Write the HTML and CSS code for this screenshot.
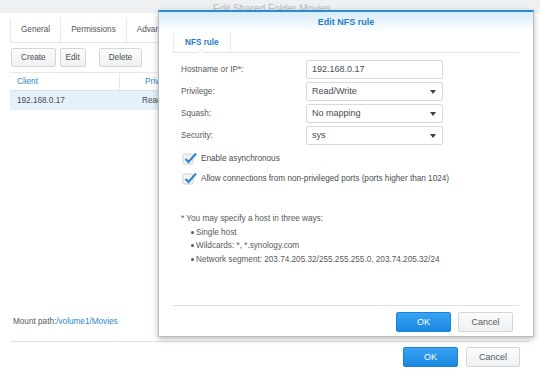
FILE: index.html
```html
<!DOCTYPE html>
<html lang="en">
<head>
    <meta charset="UTF-8">
    <title>Edit NFS rule</title>
    <link rel="stylesheet" href="styles.css">
</head>
<body>
    <div class="window">
        <div class="win-title">Edit Shared Folder Movies</div>
        <div class="win-body">
            <div class="tabs">
                <div class="tab active">General</div>
                <div class="tab">Permissions</div>
                <div class="tab">Advanced</div>
            </div>
            <div class="toolbar">
                <button class="btn">Create</button>
                <button class="btn btn-edit">Edit</button>
                <button class="btn btn-delete">Delete</button>
            </div>
            <div class="grid">
                <div class="grid-head">
                    <div class="col-client">Client</div>
                    <div class="col-priv">Privilege</div>
                </div>
                <div class="grid-row selected">
                    <div class="col-client">192.168.0.17</div>
                    <div class="col-priv">Read/Write</div>
                </div>
            </div>
            <div class="spacer"></div>
            <div class="mount">Mount path:<span class="link">/volume1/Movies</span></div>
        </div>
        <div class="win-footer">
            <button class="btn btn-primary">OK</button>
            <button class="btn btn-cancel">Cancel</button>
        </div>
    </div>

    <!-- NFS rule dialog -->
    <div class="dialog">
        <div class="dlg-title">Edit NFS rule</div>
        <div class="dlg-body">
            <div class="dlg-tabs">
                <div class="dlg-tab">NFS rule</div>
            </div>
            <div class="form">
                <div class="form-row">
                    <div class="label">Hostname or IP*:</div>
                    <div class="field">192.168.0.17</div>
                </div>
                <div class="form-row">
                    <div class="label">Privilege:</div>
                    <div class="field select">Read/Write<span class="arrow"></span></div>
                </div>
                <div class="form-row">
                    <div class="label">Squash:</div>
                    <div class="field select">No mapping<span class="arrow"></span></div>
                </div>
                <div class="form-row">
                    <div class="label">Security:</div>
                    <div class="field select">sys<span class="arrow"></span></div>
                </div>
                <div class="check-row">
                    <svg class="check" width="16" height="14" viewBox="0 0 16 14"><rect x="1" y="3" width="10" height="10" rx="1.5" fill="#f3f4f5" stroke="#cdd1d5"/><path d="M3.5 8 L6.5 11 L14 2.5" fill="none" stroke="#2b86d4" stroke-width="2.2"/></svg>
                    <span>Enable asynchronous</span>
                </div>
                <div class="check-row">
                    <svg class="check" width="16" height="14" viewBox="0 0 16 14"><rect x="1" y="3" width="10" height="10" rx="1.5" fill="#f3f4f5" stroke="#cdd1d5"/><path d="M3.5 8 L6.5 11 L14 2.5" fill="none" stroke="#2b86d4" stroke-width="2.2"/></svg>
                    <span>Allow connections from non-privileged ports (ports higher than 1024)</span>
                </div>
                <div class="note">* You may specify a host in three ways:</div>
                <ul class="ways">
                    <li>Single host</li>
                    <li>Wildcards: *, *.synology.com</li>
                    <li>Network segment: 203.74.205.32/255.255.255.0, 203.74.205.32/24</li>
                </ul>
            </div>
            <div class="spacer"></div>
            <div class="dlg-footer">
                <button class="btn btn-primary">OK</button>
                <button class="btn btn-cancel">Cancel</button>
            </div>
        </div>
    </div>
</body>
</html>
```

FILE: styles.css
```css
* {
    box-sizing: border-box;
}
body {
    margin: 0;
    width: 540px;
    height: 370px;
    overflow: hidden;
    position: relative;
    font-family: "Liberation Sans", Arial, sans-serif;
    font-size: 8.2px;
    color: #484c50;
    background: #fff;
}
.window {
    height: 370px;
    display: flex;
    flex-direction: column;
}
.win-title {
    height: 13px;
    background: #eef0f2;
    color: #b9bcc0;
    font-size: 10px;
    line-height: 13px;
    padding: 2px 0 0 213px;
    overflow: hidden;
}
.win-body {
    flex: 1;
    padding: 5px 10px 0;
    display: flex;
    flex-direction: column;
}
.tabs {
    display: flex;
    height: 25px;
    border-bottom: 1px solid #e3e6e9;
}
.tab {
    padding: 0 10px;
    line-height: 23px;
    color: #505458;
    border-right: 1px solid #e8eaec;
}
.tab.active {
    border-left: 1px solid #e8eaec;
}
.toolbar {
    display: flex;
    margin-top: 5px;
    padding-left: 1px;
}
.btn {
    height: 19px;
    padding: 0 9px;
    border: 1px solid #d3d7db;
    border-radius: 2px;
    background: linear-gradient(#fbfcfc, #eef0f2);
    font-family: inherit;
    font-size: 8.2px;
    color: #4a4e52;
}
.btn-edit {
    margin-left: 4px;
    padding: 0 5px;
}
.btn-delete {
    margin-left: 13px;
}
.grid {
    margin-top: 5px;
}
.grid-head {
    display: flex;
    height: 19px;
    border-top: 1px solid #e6e8eb;
    border-bottom: 1px solid #dfe2e5;
    color: #2a87d0;
}
.grid-row {
    display: flex;
    height: 19px;
}
.grid-row.selected {
    background: #e4f0fa;
}
.col-client {
    width: 110px;
    padding-left: 7px;
    display: flex;
    align-items: center;
}
.grid-head .col-client {
    border-right: 1px solid #e6e8eb;
}
.col-priv {
    padding-left: 22px;
    display: flex;
    align-items: center;
}
.grid-head .col-priv {
    padding-left: 25px;
}
.spacer {
    flex: 1;
}
.mount {
    line-height: 12px;
    padding: 0 3px 13px;
    border-bottom: 1px solid #dfe2e5;
    color: #55595d;
}
.link {
    color: #2a87d0;
}
.win-footer {
    height: 28px;
    display: flex;
    justify-content: flex-end;
    align-items: flex-start;
    gap: 8px;
    padding: 5px 20px 0 0;
}
.btn-primary {
    width: 55px;
    height: 20px;
    background: linear-gradient(#38a4f4, #1a87e0);
    border-color: #1b80d6;
    color: #fff;
    font-size: 9px;
}
.btn-cancel {
    width: 54px;
    height: 20px;
    font-size: 9px;
    color: #55595d;
}

/* dialog */
.dialog {
    position: absolute;
    left: 158px;
    top: 10px;
    width: 376px;
    height: 327px;
    background: #fff;
    border: 1px solid #b9bdc2;
    border-top: 2px solid #2a8ad6;
    box-shadow: 0 2px 6px rgba(0, 0, 0, 0.28);
    display: flex;
    flex-direction: column;
}
.dlg-title {
    height: 20px;
    line-height: 20px;
    text-align: center;
    font-size: 9px;
    font-weight: bold;
    color: #1e7ccc;
    background: linear-gradient(#d8ecfa, #fff);
}
.dlg-body {
    flex: 1;
    padding: 0 14px;
    display: flex;
    flex-direction: column;
}
.dlg-tabs {
    height: 21px;
    border-bottom: 1px solid #dfe2e5;
    display: flex;
}
.dlg-tab {
    position: relative;
    margin-top: 1px;
    padding: 0 11px;
    line-height: 20px;
    font-weight: bold;
    color: #1e7ccc;
    border-left: 1px solid #e8eaec;
    border-right: 1px solid #e8eaec;
}
.dlg-tab::before,
.dlg-tab::after {
    content: "";
    position: absolute;
    left: 23px;
    border: 4px solid transparent;
}
.dlg-tab::before {
    bottom: -1px;
    border-bottom-color: #dfe2e5;
}
.dlg-tab::after {
    bottom: -2px;
    border-bottom-color: #fff;
}
.form {
    padding: 7px 0 0 8px;
}
.form-row {
    display: flex;
    align-items: center;
    height: 19px;
    margin-bottom: 3px;
}
.label {
    width: 125px;
    color: #55595d;
}
.field {
    position: relative;
    width: 137px;
    height: 19px;
    line-height: 17px;
    padding-left: 5px;
    border: 1px solid #d6dadd;
    border-radius: 2px;
    font-size: 9px;
    color: #474b4f;
}
.arrow {
    position: absolute;
    right: 6px;
    top: 7px;
    border: 3.5px solid transparent;
    border-top: 4px solid #3c4044;
    border-bottom: 0;
}
.check-row {
    display: flex;
    align-items: center;
    height: 20px;
    margin-left: 1px;
    gap: 3px;
}
.check-row:first-of-type {
    margin-top: 2px;
}
.note {
    margin-top: 24px;
    line-height: 13.5px;
    color: #55595d;
}
.ways {
    list-style: none;
    margin: 0;
    padding: 0;
    color: #55595d;
}
.ways li {
    position: relative;
    line-height: 13.5px;
    padding-left: 15px;
}
.ways li::before {
    content: "";
    position: absolute;
    left: 10px;
    top: 5px;
    width: 3px;
    height: 3px;
    border-radius: 50%;
    background: #55595d;
}
.dlg-footer {
    height: 31px;
    border-top: 1px solid #dfe2e5;
    display: flex;
    justify-content: flex-end;
    align-items: flex-start;
    gap: 7px;
    padding: 6px 6px 0 0;
}
.dlg-footer .btn-cancel {
    width: 55px;
}
```
